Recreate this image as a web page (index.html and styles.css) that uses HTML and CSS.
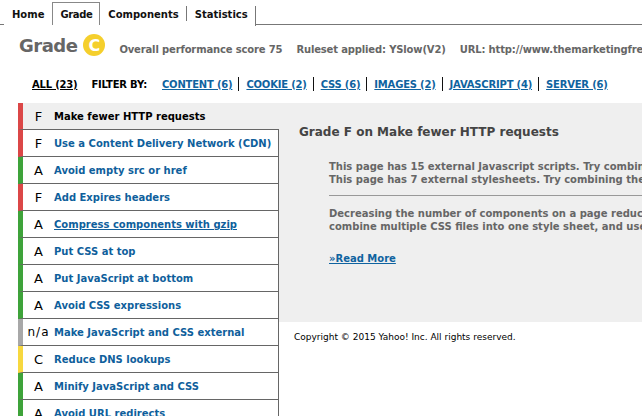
FILE: index.html
```html
<!DOCTYPE html>
<html>
<head>
<meta charset="utf-8">
<title>YSlow</title>
<link rel="stylesheet" href="styles.css">
</head>
<body>
<nav class="tabs">
  <span class="tab-edge"></span>
  <a class="tab">Home</a>
  <a class="tab active">Grade</a>
  <a class="tab sep">Components</a>
  <a class="tab sep last">Statistics</a>
  <span class="tab-fill"></span>
</nav>

<header class="summary">
  <h1 class="grade-title">Grade <span class="grade-badge">C</span></h1>
  <span class="meta">Overall performance score 75</span>
  <span class="meta">Ruleset applied: YSlow(V2)</span>
  <span class="meta url">URL: http://www.themarketingfreaks.com/</span>
</header>

<div class="filters">
  <a class="filter-all">ALL (23)</a>
  <span class="filter-label">FILTER BY:</span>
  <a class="filter">CONTENT (6)</a><span class="bar"></span>
  <a class="filter">COOKIE (2)</a><span class="bar"></span>
  <a class="filter">CSS (6)</a><span class="bar"></span>
  <a class="filter">IMAGES (2)</a><span class="bar"></span>
  <a class="filter">JAVASCRIPT (4)</a><span class="bar"></span>
  <a class="filter">SERVER (6)</a>
</div>

<main class="report">
  <ul class="rules">
    <li class="rule selected f"><span class="letter">F</span><span class="name">Make fewer HTTP requests</span></li>
    <li class="rule f"><span class="letter">F</span><a class="name">Use a Content Delivery Network (CDN)</a></li>
    <li class="rule a"><span class="letter">A</span><a class="name">Avoid empty src or href</a></li>
    <li class="rule f"><span class="letter">F</span><a class="name">Add Expires headers</a></li>
    <li class="rule a"><span class="letter">A</span><a class="name hover">Compress components with gzip</a></li>
    <li class="rule a"><span class="letter">A</span><a class="name">Put CSS at top</a></li>
    <li class="rule a"><span class="letter">A</span><a class="name">Put JavaScript at bottom</a></li>
    <li class="rule a"><span class="letter">A</span><a class="name">Avoid CSS expressions</a></li>
    <li class="rule na"><span class="letter">n/a</span><a class="name">Make JavaScript and CSS external</a></li>
    <li class="rule c"><span class="letter">C</span><a class="name">Reduce DNS lookups</a></li>
    <li class="rule a"><span class="letter">A</span><a class="name">Minify JavaScript and CSS</a></li>
    <li class="rule a"><span class="letter">A</span><a class="name">Avoid URL redirects</a></li>
  </ul>

  <section class="details">
    <div class="panel">
      <h2 class="panel-title">Grade F on Make fewer HTTP requests</h2>
      <div class="panel-body">
        <p class="findings">This page has 15 external Javascript scripts. Try combining them into one.<br>This page has 7 external stylesheets. Try combining them into one.</p>
        <hr class="rule-line">
        <p class="advice">Decreasing the number of components on a page reduces the number of HTTP requests required to render the page, resulting in faster page loads. Some ways to reduce the number of components include: combine files, combine multiple scripts into one script,<br>combine multiple CSS files into one style sheet, and use CSS Sprites and image maps.</p>
        <a class="read-more">»Read More</a>
      </div>
    </div>
    <footer class="copyright">Copyright © 2015 Yahoo! Inc. All rights reserved.</footer>
  </section>
</main>
</body>
</html>
```

FILE: styles.css
```css
html, body {
  margin: 0;
  padding: 0;
  background: #fff;
  overflow: hidden;
}

body {
  width: 642px;
  height: 416px;
  font-family: "DejaVu Sans", Verdana, sans-serif;
  font-size: 10px;
  color: #000;
}

a { cursor: pointer; }

/* top tab strip */
.tabs {
  display: flex;
  align-items: flex-end;
  height: 25px;
  padding-top: 2px;
  box-sizing: border-box;
}

.tab-edge {
  width: 4px;
  align-self: stretch;
  border-bottom: 1px solid #777;
}

.tab-fill {
  flex: 1;
  align-self: stretch;
  border-bottom: 1px solid #777;
}

.tab {
  font-weight: bold;
  font-size: 10px;
  color: #111;
  padding: 0 7px;
  height: 23px;
  line-height: 23px;
  box-sizing: border-box;
  border: 1px solid transparent;
  border-bottom: none;
}

.tab.active {
  border-color: #888;
  letter-spacing: -0.4px;
}

.tab.sep {
  position: relative;
}

.tab.sep::after {
  content: "";
  position: absolute;
  right: -1px;
  top: 3px;
  bottom: 4px;
  border-right: 1px solid #777;
}

.tab.last::after {
  bottom: -1px;
}

/* grade summary */
.summary {
  display: flex;
  align-items: center;
  height: 40px;
  padding-left: 19px;
}

.grade-title {
  margin: 0 14px 0 0;
  display: flex;
  align-items: center;
  font-size: 18px;
  letter-spacing: -0.5px;
  font-weight: bold;
  color: #666;
}

.grade-badge {
  display: inline-flex;
  align-items: center;
  justify-content: center;
  width: 22px;
  height: 22px;
  margin-left: 6px;
  border-radius: 50%;
  background: #f5cf2c;
  color: #fff;
  font-size: 16px;
  letter-spacing: 0;
  font-weight: bold;
}

.meta {
  font-weight: bold;
  color: #666;
  margin-right: 14px;
  letter-spacing: -0.15px;
  white-space: nowrap;
  padding-top: 9px;
}

/* filter row */
.filters {
  display: flex;
  align-items: center;
  height: 38px;
  padding-left: 32px;
  white-space: nowrap;
  font-weight: bold;
  letter-spacing: -0.2px;
}

.filter-all {
  color: #000;
  text-decoration: underline;
  margin-right: 14px;
}

.filter-label {
  margin-right: 15px;
}

.filter {
  color: #0f63a0;
  text-decoration: underline;
}

.bar {
  display: inline-block;
  width: 1px;
  height: 14px;
  background: #111;
  margin: 0 7px 0 6px;
}

/* rule list and details */
.report {
  display: flex;
  align-items: flex-start;
  padding-left: 18px;
}

.rules {
  list-style: none;
  margin: 0;
  padding: 0;
  width: 261px;
  flex: none;
}

.rule {
  display: flex;
  align-items: center;
  height: 27px;
  box-sizing: border-box;
  border-bottom: 1px solid #666;
  border-right: 1px solid #666;
  border-left: 5px solid #3ea33a;
  font-weight: bold;
}

.rule.f { border-left-color: #db4747; }
.rule.a { border-left-color: #3ea33a; }
.rule.c { border-left-color: #f7d83f; }
.rule.na { border-left-color: #a8a8a8; }

.rule.selected {
  background: #efefef;
  border-right-color: #efefef;
  margin-right: -1px;
}

.letter {
  width: 31px;
  text-align: center;
  font-size: 13px;
  color: #000;
  font-weight: normal;
}

.rule.na .letter {
  font-size: 12px;
  letter-spacing: 1px;
}

.name {
  color: #0f5f9c;
  white-space: nowrap;
}

.rule.selected .name {
  color: #000;
}

.name.hover {
  text-decoration: underline;
}

.details {
  flex: 1;
  min-width: 0;
}

.panel {
  background: #efefef;
  height: 219px;
  padding: 22px 0 0 20px;
  box-sizing: border-box;
  overflow: hidden;
}

.panel-title {
  margin: 0 0 21px;
  font-size: 12px;
  font-weight: bold;
  color: #444;
  white-space: nowrap;
}

.panel-body {
  padding-left: 30px;
  font-weight: bold;
  color: #666;
  white-space: nowrap;
}

.findings,
.advice {
  margin: 0;
  line-height: 13px;
}

.rule-line {
  margin: 9px 0 11px;
  border: none;
  border-top: 1px solid #999;
}

.read-more {
  display: inline-block;
  margin-top: 20px;
  color: #0f63a0;
  text-decoration: underline;
}

.copyright {
  padding: 10px 0 0 15px;
  font-size: 9px;
  color: #000;
}
```
